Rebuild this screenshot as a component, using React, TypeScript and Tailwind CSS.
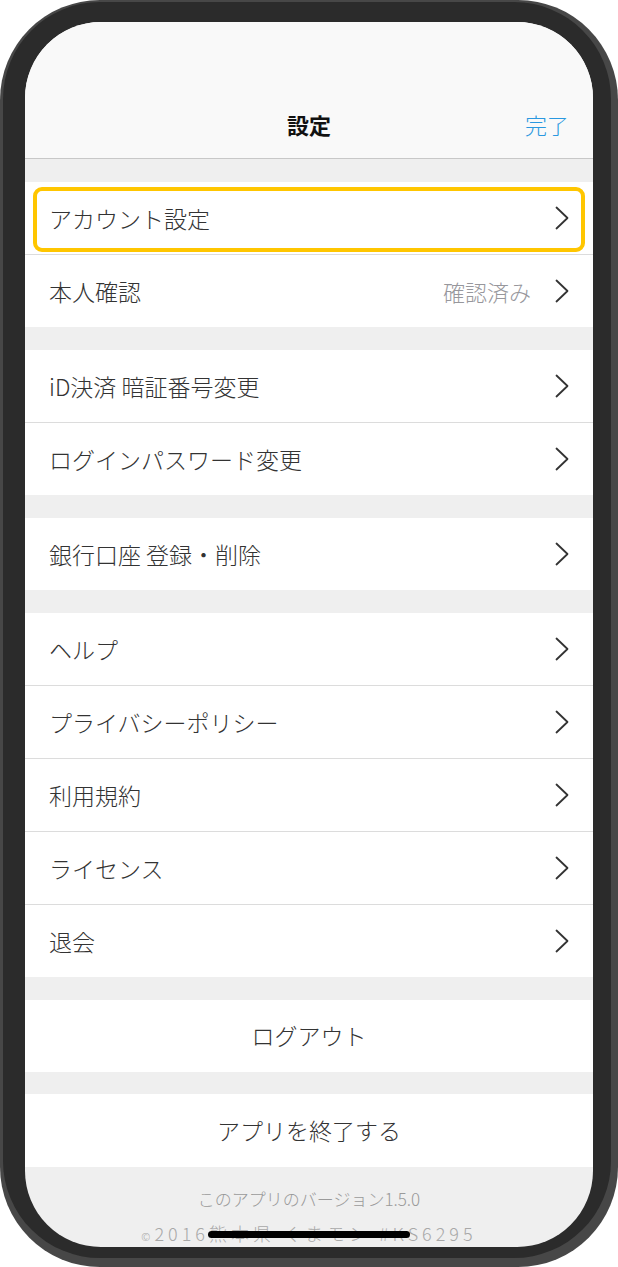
const font = { fontFamily: '"Noto Sans CJK JP", "Noto Sans", sans-serif' }

const Chevron = () => (
  <svg width="14" height="24" viewBox="0 0 14 24" fill="none" className="shrink-0">
    <path d="M1.5 1.5L12.5 12L1.5 22.5" stroke="#333" strokeWidth="1.8" strokeLinecap="round" strokeLinejoin="round" />
  </svg>
)

type RowProps = { label: string; detail?: string; highlighted?: boolean; last?: boolean }

const Row = ({ label, detail, highlighted, last }: RowProps) => (
  <div
    className={`relative flex items-center bg-white pl-[24px] pr-[24px] ${
      last ? "h-[72px]" : "h-[73px] border-b border-[#dcdcdc]"
    }`}
  >
    <span className="flex-1 text-[23px] font-light text-[#333]">{label}</span>
    {detail && <span className="mr-[24px] text-[22px] font-light text-[#97979c]">{detail}</span>}
    <Chevron />
    {highlighted && (
      <div className="absolute left-[8px] right-[8px] top-[5px] bottom-[2px] rounded-[9px] border-[4px] border-[#ffc600]" />
    )}
  </div>
)

const Gap = () => <div className="h-[23px] bg-[#efefef]" />

const groups: RowProps[][] = [
  [{ label: "アカウント設定", highlighted: true }, { label: "本人確認", detail: "確認済み" }],
  [{ label: "iD決済 暗証番号変更" }, { label: "ログインパスワード変更" }],
  [{ label: "銀行口座 登録・削除" }],
  [
    { label: "ヘルプ" },
    { label: "プライバシーポリシー" },
    { label: "利用規約" },
    { label: "ライセンス" },
    { label: "退会" },
  ],
]

export default function App() {
  return (
    <div className="w-[618px] h-[1267px] bg-white" style={font}>
      <div className="h-full rounded-[100px] bg-[#474747] pl-[3px] pt-[2px] pr-[7px] pb-[9px]">
        <div className="h-full rounded-[97px] bg-[#2b2b2b] pl-[22px] pr-[18px] pt-[20px] pb-[11px]">
          <div className="relative flex h-full flex-col overflow-hidden rounded-[76px] bg-[#efefef]">
            <header className="grid h-[137px] shrink-0 grid-cols-[1fr_auto_1fr] items-end border-b border-[#c8c8c8] bg-[#f9f9f9] pb-[17px]">
              <div />
              <h1 className="text-[22px] font-bold text-[#111]">設定</h1>
              <div className="flex justify-end pr-[24px]">
                <span className="text-[22px] font-light text-[#2a98e0]">完了</span>
              </div>
            </header>

            {groups.map((group, gi) => (
              <div key={gi}>
                <Gap />
                {group.map((row, ri) => (
                  <Row key={ri} {...row} last={ri === group.length - 1} />
                ))}
              </div>
            ))}

            <Gap />
            <div className="flex h-[73px] items-center justify-center bg-white text-[23px] font-light text-[#333]">
              ログアウト
            </div>
            <Gap />
            <div className="flex h-[73px] items-center justify-center bg-white text-[23px] font-light text-[#333]">
              アプリを終了する
            </div>

            <div className="flex flex-col items-center pt-[19px] text-[#9a9a9a]">
              <p className="text-[17px] font-light">このアプリのバージョン1.5.0</p>
              <p className="mt-[9px] text-[18px] font-light tracking-[4px] text-[#a8a8a8]">
                <span className="text-[11px]">©</span>2016熊本県 くまモン #KS6295
              </p>
            </div>

            <div className="absolute bottom-[9px] left-[183px] h-[7px] w-[202px] rounded-full bg-black" />
          </div>
        </div>
      </div>
    </div>
  )
}
